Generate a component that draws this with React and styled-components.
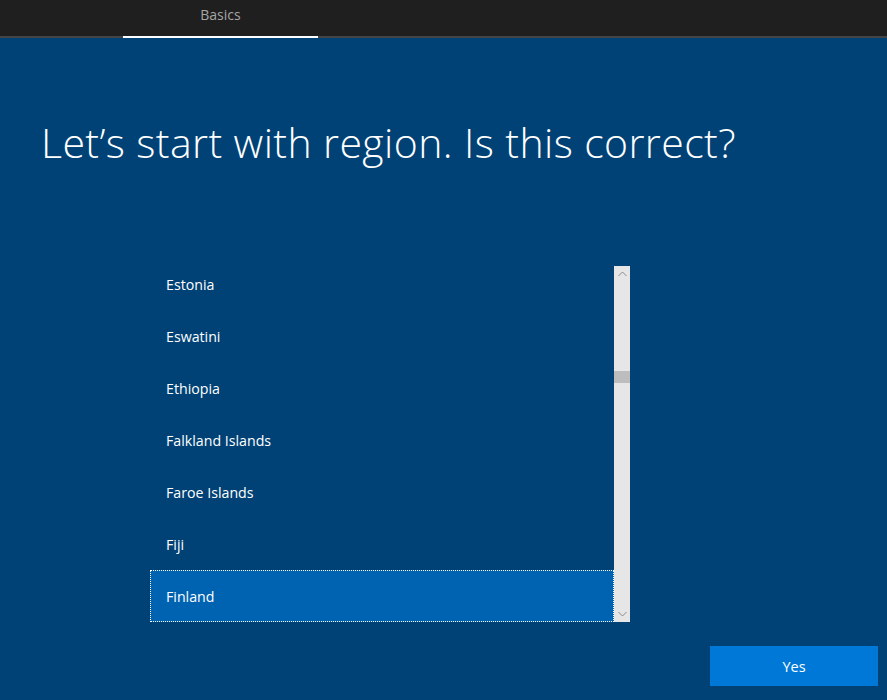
import React from "react";
import styled, { createGlobalStyle } from "styled-components";

const GlobalStyle = createGlobalStyle`
  html, body {
    margin: 0;
    padding: 0;
    background: #00457a;
    font-family: "Open Sans", "Liberation Sans", sans-serif;
  }
`;

const Page = styled.div`
  width: 887px;
  height: 700px;
  background: #004275;
  display: flex;
  flex-direction: column;
  overflow: hidden;
`;

const TopBar = styled.div`
  height: 36px;
  background: #1f1f1f;
  border-bottom: 2px solid #444444;
  display: flex;
  padding-left: 123px;
`;

const Tab = styled.div`
  width: 195px;
  height: 36px;
  display: flex;
  align-items: center;
  justify-content: center;
  box-sizing: border-box;
  padding-bottom: 8px;
  color: #a6a6a6;
  font-size: 14px;
  position: relative;
  &::after {
    content: "";
    position: absolute;
    left: 0;
    right: 0;
    bottom: -2px;
    height: 2px;
    background: ${(p) => (p.active ? "#ffffff" : "transparent")};
  }
`;

const Title = styled.h1`
  margin: 76px 0 0 41px;
  color: #ffffff;
  font-weight: 300;
  font-size: 41px;
  line-height: 56px;
  letter-spacing: 0.4px;
`;

const ListArea = styled.div`
  margin: 96px 0 0 150px;
  display: flex;
  width: 480px;
  height: 356px;
`;

const List = styled.div`
  width: 464px;
  height: 356px;
  overflow: hidden;
  display: flex;
  flex-direction: column;
`;

const Rows = styled.div`
  margin-top: -8px;
  display: flex;
  flex-direction: column;
`;

const Row = styled.div`
  height: 52px;
  flex-shrink: 0;
  display: flex;
  align-items: center;
  padding-left: 16px;
  box-sizing: border-box;
  color: #ffffff;
  font-size: 14.2px;
  background: ${(p) => (p.selected ? "#0063b1" : "transparent")};
  outline: ${(p) => (p.selected ? "1px dotted #ffffff" : "none")};
  outline-offset: -1px;
`;

const ScrollBar = styled.div`
  width: 16px;
  height: 356px;
  background: #e6e6e6;
  display: flex;
  flex-direction: column;
  align-items: center;
`;

const Arrow = styled.div`
  height: 16px;
  display: flex;
  align-items: center;
  justify-content: center;
`;

const Track = styled.div`
  flex: 1;
  width: 100%;
  padding-top: 89px;
  box-sizing: border-box;
`;

const Thumb = styled.div`
  width: 100%;
  height: 12px;
  background: #bdbdbd;
`;

const Footer = styled.div`
  margin-top: 24px;
  display: flex;
  justify-content: flex-end;
  padding-right: 9px;
`;

const YesButton = styled.button`
  width: 168px;
  height: 40px;
  border: none;
  background: #0078d7;
  color: #ffffff;
  font-family: "Open Sans", "Liberation Sans", sans-serif;
  font-size: 14.5px;
`;

const countries = [
  "Estonia",
  "Eswatini",
  "Ethiopia",
  "Falkland Islands",
  "Faroe Islands",
  "Fiji",
  "Finland",
];

export default function App() {
  return (
    <Page>
      <GlobalStyle />
      <TopBar>
        <Tab active>Basics</Tab>
      </TopBar>
      <Title>Let’s start with region. Is this correct?</Title>
      <ListArea>
        <List>
          <Rows>
            {countries.map((c) => (
              <Row key={c} selected={c === "Finland"}>
                {c}
              </Row>
            ))}
          </Rows>
        </List>
        <ScrollBar>
          <Arrow>
            <svg width="9" height="6" viewBox="0 0 9 6">
              <path d="M0.5 5 L4.5 1 L8.5 5" fill="none" stroke="#8a8a8a" strokeWidth="1" />
            </svg>
          </Arrow>
          <Track>
            <Thumb />
          </Track>
          <Arrow>
            <svg width="9" height="6" viewBox="0 0 9 6">
              <path d="M0.5 1 L4.5 5 L8.5 1" fill="none" stroke="#8a8a8a" strokeWidth="1" />
            </svg>
          </Arrow>
        </ScrollBar>
      </ListArea>
      <Footer>
        <YesButton>Yes</YesButton>
      </Footer>
    </Page>
  );
}
